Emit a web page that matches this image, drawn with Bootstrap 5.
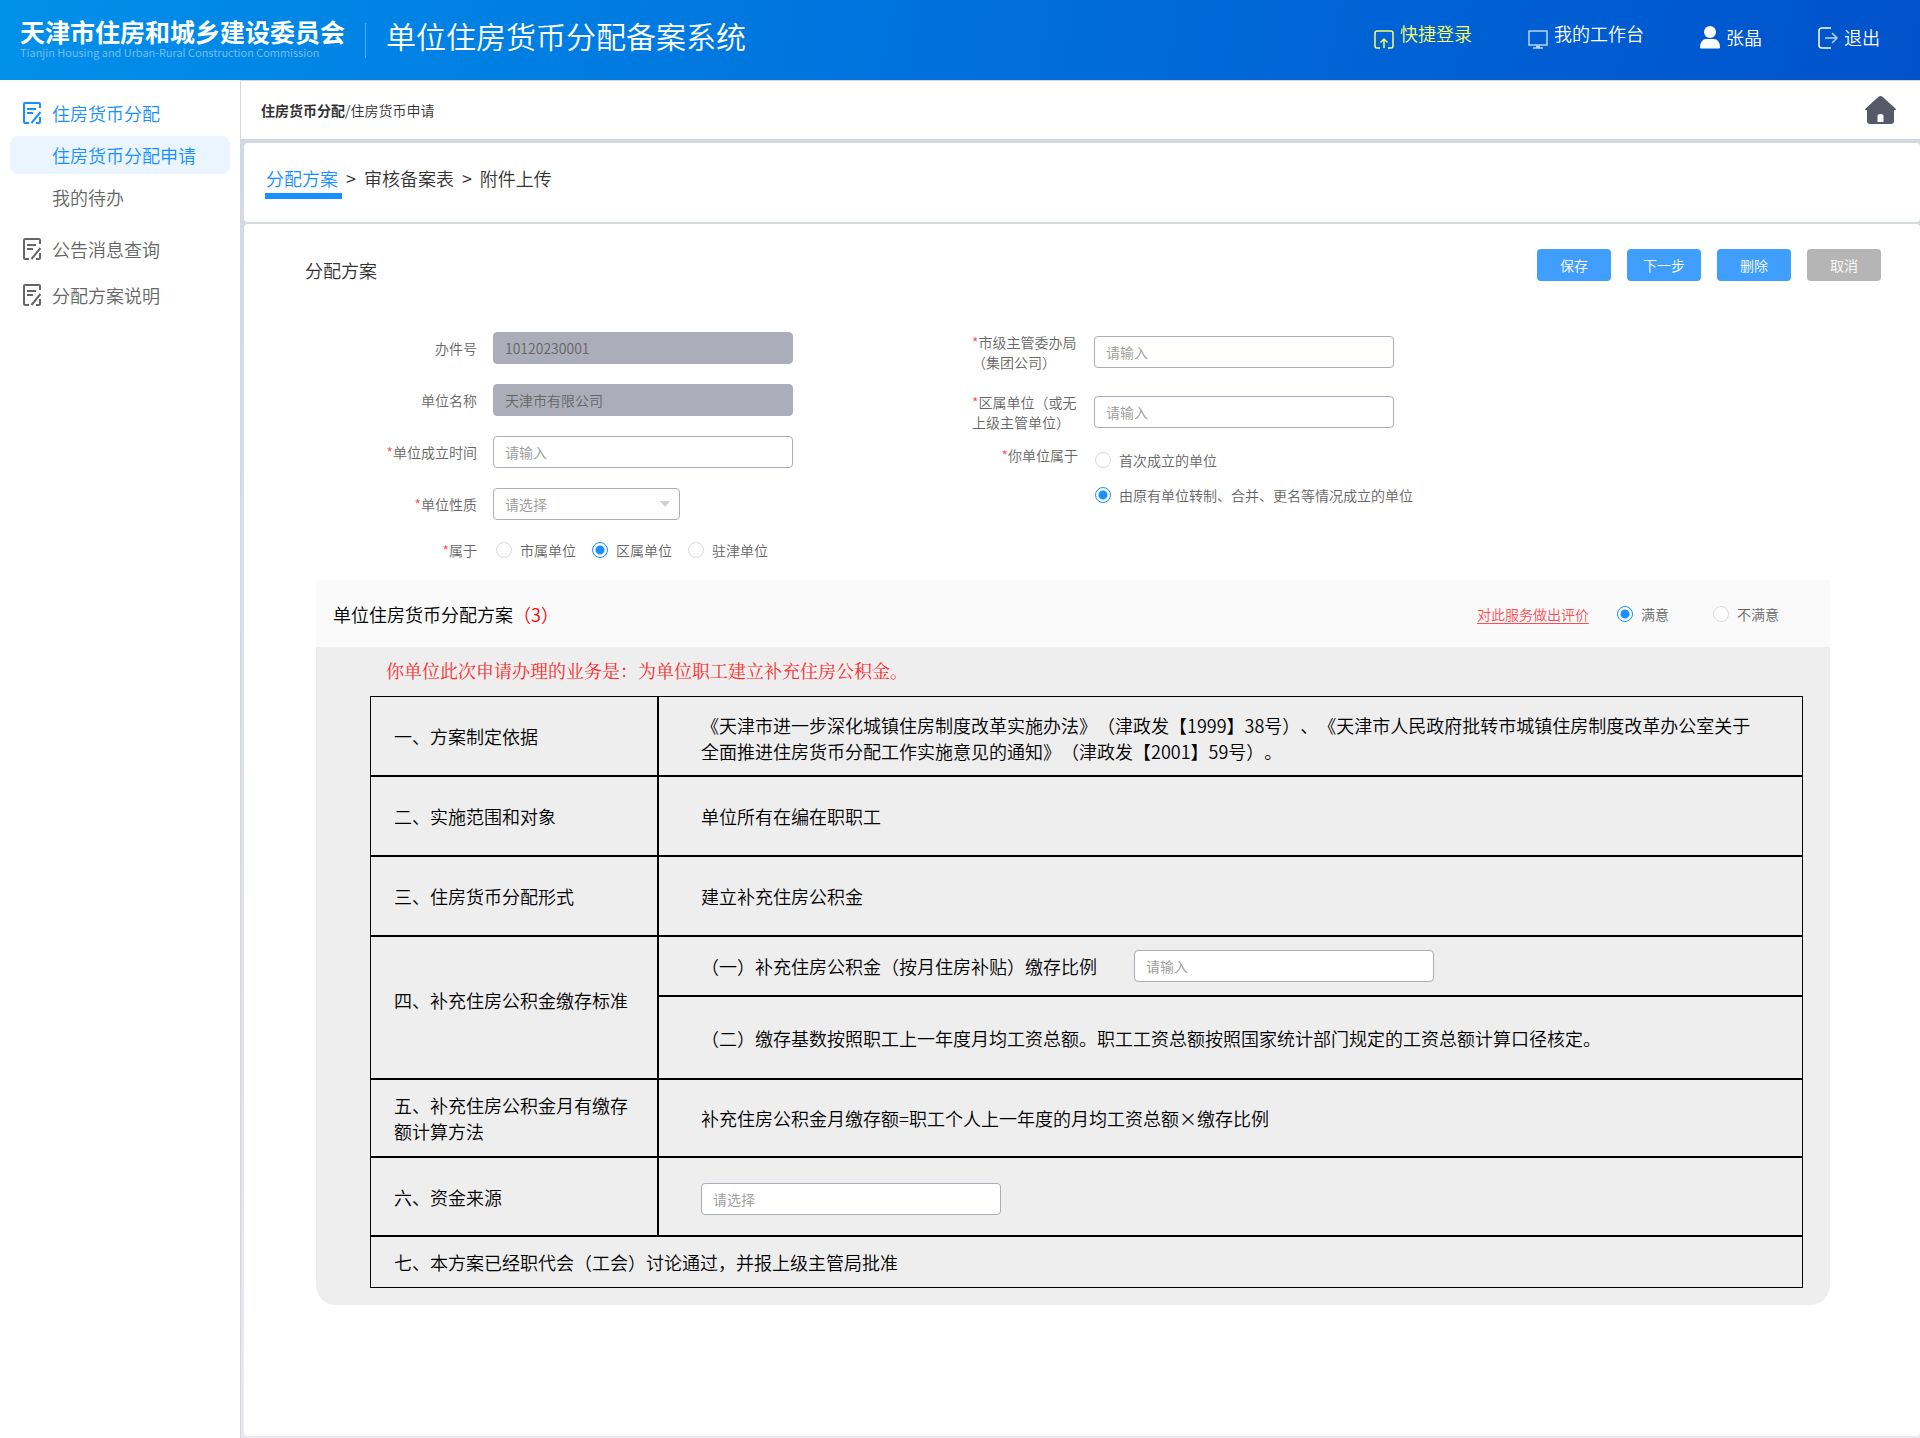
<!DOCTYPE html>
<html lang="zh-CN">
<head>
<meta charset="utf-8">
<meta name="viewport" content="width=device-width, initial-scale=1">
<title>单位住房货币分配备案系统</title>
<link rel="stylesheet" href="https://cdn.jsdelivr.net/npm/bootstrap@5.3.0/dist/css/bootstrap.min.css">
<style>
:root{--brand:#1890ff;--line:#d3d7e0;--field:#abadb9;--ink:#666}
body{font-family:"Noto Sans CJK SC",sans-serif;font-size:14px;font-weight:350;line-height:20px;color:var(--ink);background:#fff;text-spacing-trim:space-all}
a{text-decoration:none;color:inherit}
.topbar{height:80px;background:linear-gradient(100deg,#0190ea 0%,#0070dc 50%,#0052cb 100%);color:#fff;padding:0 40px 0 20px}
.org{padding-bottom:5px}
.org-name{font-size:25px;line-height:28px;font-weight:700}
.org-sub{font-size:11px;line-height:14px;color:#7cc3f3}
.brand-rule{width:1px;height:35px;background:#4fadf0;margin:0 20px}
.sys-name{font-size:30px;line-height:40px;padding-bottom:11px}
.topnav{gap:56px;font-size:18px;line-height:24px;padding-bottom:11px}
.topnav a{gap:6px;height:28px}
.topnav .hot{color:#f8ff6b}
.topnav svg,.side svg{flex:none}
.side{width:241px;flex:none;border-right:1px solid var(--line);padding:14px 10px;font-size:18px;line-height:38px}
.side a{height:38px;padding-left:13px}
.side svg{margin-right:11px}
.side .sub-item{padding-left:42px;border-radius:8px}
.side .sub-item.now{background:#eaf5ff}
.side .top-item{margin-top:14px}
.blue,.side .blue{color:var(--brand)}
.work{background:linear-gradient(#d3d7e0,#e9e9ef)}
.crumbs{height:59px;padding:0 24px 0 20px;background:#fff;color:#333;border-top:1px solid var(--line)}
.sheet{background:#fff;border-radius:4px;margin-left:3px}
.steps{height:79px;margin-top:4px;padding:21px 22px 0;font-size:18px;line-height:28px;color:#333}
.steps .step-now{border-bottom:6px solid var(--brand);height:35px;padding:0 4px 0 1px;margin:0 -4px 0 -1px}
.plan{margin-top:2px;margin-bottom:2px;padding:25px 39px 64px 61px}
.plan h1{font-size:18px;line-height:22px;color:#333}
.plan h1,.panel-top h2{font-weight:350;margin:0}
.act{width:74px;height:32px;border:0;border-radius:4px;padding:0;font-size:14px;font-weight:350;background:#409eff;color:#fff}
.act:hover{background:#66b1ff;color:#fff}
.act.off{background:#b5b5b5}
.form-area{margin-top:51px;gap:20px 179px;padding-left:40px}
.fld-row{margin-bottom:20px;gap:16px}
.fld-row:last-child{margin-bottom:0}
.fl{width:132px;flex:none;display:flex;justify-content:flex-end}
.fr .fl{width:106px}
.fr .fld-row:nth-child(2){margin-bottom:13px}
.req::before{content:"*";color:#ff4d4f}
.fl.two-line{display:block}
.ctl.form-control,.ctl.form-select{width:300px;height:32px;padding:0 11px;font-size:14px;font-weight:350;line-height:20px;border:1px solid var(--field);border-radius:4px;color:#999;background-color:#fff}
.ctl::placeholder{color:#999;opacity:1}
.ctl.form-control:disabled{background:var(--field);color:var(--ink)}
.ctl.form-select.short{width:187px;background:#fff url("data:image/svg+xml,%3Csvg xmlns='http://www.w3.org/2000/svg' viewBox='0 0 10 6'%3E%3Cpath d='M0 0h10L5 6z' fill='%23d0d0d0'/%3E%3C/svg%3E") no-repeat right 9px center/10px 6px}
.ctl.form-select.bare{background-image:none}
.rd{gap:8px;height:20px}
.rd-set{padding-left:3px}
.rd-col{gap:15px;padding:5px 0 0 1px}
.form-check-input.dot{width:16px;height:16px;margin:0;border:1px solid #d9d9d9;background-color:#fff;flex:none}
.form-check-input.dot:checked{border-color:var(--brand);background-color:#fff;background-image:radial-gradient(circle,#1890ff 4px,transparent 5px)}
.panel-box{margin:20px 51px 0 11px;background:#eee;border-radius:0 0 20px 20px}
.panel-top{height:67px;background:#fafafa;padding:0 51px 0 17px}
.panel-top h2{font-size:18px;line-height:28px;color:#000}
.alarm{color:#f00}
.rate{color:#ff4d4f;text-decoration:underline;text-underline-offset:3px;margin-right:28px}
.rate-set{gap:44px}
.panel-main{padding:11px 27px 17px 54px}
.note{font-family:"Liberation Serif","Noto Serif CJK SC","Noto Sans CJK SC",serif;font-size:18px;font-weight:400;line-height:28px;color:#ff2a2a;padding-left:16px;margin-bottom:10px}
.rules{width:100%;border-collapse:separate;border-spacing:0;border:0;font-size:18px;line-height:26px;color:#000;table-layout:fixed}
.rules col:first-child{width:288px}
.rules th,.rules td{border:1px solid #000;font-weight:350;height:80px;padding:0 40px 0 42px;vertical-align:middle}
.rules th{padding:0 20px 0 23px;text-align:left}
.rules .low>td{height:60px}
.rules .low>th{padding-bottom:15px}
.rules .base>td{height:83px}
.rules .calc>*{height:78px}
.rules .fund>*{height:79px}
.rules .last>th{height:52px}
.rules td.drop{padding-top:4px}
.pct-line{gap:37px}
</style>
</head>
<body class="d-flex flex-column min-vh-100">
<svg class="d-none" xmlns="http://www.w3.org/2000/svg">
  <symbol id="doc" viewBox="0 0 18 22"><path fill="none" stroke="currentColor" stroke-width="2" d="M6 21H2Q1 21 1 20V2Q1 1 2 1h14Q17 1 17 2V6M17 15v5Q17 21 16 21H13M4 7h9M4 11h6M17.500 10 8.500 21"/></symbol>
</svg>

<header class="topbar d-flex align-items-center">
  <div class="org">
    <div class="org-name">天津市住房和城乡建设委员会</div>
    <div class="org-sub">Tianjin Housing and Urban-Rural Construction Commission</div>
  </div>
  <div class="brand-rule"></div>
  <div class="sys-name">单位住房货币分配备案系统</div>
  <nav class="topnav d-flex ms-auto" aria-label="快捷">
    <a href="#" class="hot d-flex">
      <svg class="align-self-end" width="20" height="19" viewBox="0 0 20 19" fill="none" stroke="currentColor" stroke-width="1.500"><path d="M6 18H3Q1 18 1 16V3Q1 1 3 1h14q2 0 2 2v13q0 2-2 2h-3M10 18V9M6.500 12.500 10 9l3.500 3.500"/></svg>
      <span>快捷登录</span></a>
    <a href="#" class="d-flex">
      <svg class="align-self-end" width="20" height="19" viewBox="0 0 20 19" fill="none" stroke="#b8d6f7" stroke-width="1.500"><rect x="1" y="1" width="18" height="14"/><path d="M5 18h10M8 16.500h4"/></svg>
      <span>我的工作台</span></a>
    <a href="#" class="d-flex align-items-end">
      <svg width="20" height="23" viewBox="0 0 20 23" fill="#fff"><circle cx="10" cy="6" r="6"/><path d="M0 21.500C0 16 3 13 6 13h8c3 0 6 3 6 8.500q0 1-1 1H1q-1 0-1-1z"/></svg>
      <span>张晶</span></a>
    <a href="#" class="d-flex align-items-end">
      <svg width="20" height="22" viewBox="0 0 20 22" fill="none" stroke="#fff" stroke-width="1.500"><path d="M13 1H4Q1 1 1 4v14q0 3 3 3h9"/><path stroke="#b8d6f7" d="M7 11h12M14 6l5 5-5 5"/></svg>
      <span>退出</span></a>
  </nav>
</header>

<div class="d-flex flex-grow-1">
  <nav class="side d-flex flex-column" aria-label="菜单">
    <a href="#" class="blue d-flex align-items-center"><svg width="18" height="22"><use href="#doc"/></svg>住房货币分配</a>
    <a href="#" class="sub-item now blue d-block mt-1">住房货币分配申请</a>
    <a href="#" class="sub-item d-block mt-1">我的待办</a>
    <a href="#" class="top-item d-flex align-items-center"><svg width="18" height="22"><use href="#doc"/></svg>公告消息查询</a>
    <a href="#" class="d-flex align-items-center mt-2"><svg width="18" height="22"><use href="#doc"/></svg>分配方案说明</a>
  </nav>

  <main class="work d-flex flex-column flex-grow-1">
    <div class="crumbs d-flex align-items-center justify-content-between">
      <div><strong>住房货币分配</strong>/住房货币申请</div>
      <a href="#" aria-label="首页"><svg class="d-block" width="31" height="28" viewBox="0 0 31 28" fill="#555a66"><path fill-rule="evenodd" d="M13 1.200Q15.500-1 18 1.200l12.500 11.300q1 1.500-.500 1.500H29v11q0 3-3 3H5q-3 0-3-3V14H1q-1.500 0-.5-1.500zM12.500 26h6v-6q0-2-3-2t-3 2z"/></svg></a>
    </div>

    <div class="sheet steps d-flex align-items-start gap-2">
      <a href="#" class="step-now blue">分配方案</a><span>&gt;</span><a href="#">审核备案表</a><span>&gt;</span><a href="#">附件上传</a>
    </div>

    <form class="sheet plan flex-grow-1">
      <div class="d-flex justify-content-between align-items-end">
        <h1>分配方案</h1>
        <div class="d-flex gap-3">
          <button type="button" class="btn act">保存</button>
          <button type="button" class="btn act">下一步</button>
          <button type="button" class="btn act">删除</button>
          <button type="button" class="btn act off">取消</button>
        </div>
      </div>

      <div class="form-area d-flex flex-wrap">
        <div>
          <div class="fld-row d-flex align-items-center"><label class="fl" for="f1">办件号</label><input id="f1" class="form-control ctl" value="10120230001" disabled></div>
          <div class="fld-row d-flex align-items-center"><label class="fl" for="f2">单位名称</label><input id="f2" class="form-control ctl" value="天津市有限公司" disabled></div>
          <div class="fld-row d-flex align-items-center"><label class="fl req" for="f3">单位成立时间</label><input id="f3" class="form-control ctl" placeholder="请输入"></div>
          <div class="fld-row d-flex align-items-center"><label class="fl req" for="f4">单位性质</label><select id="f4" class="form-select ctl short"><option>请选择</option></select></div>
          <div class="fld-row d-flex align-items-center" role="radiogroup" aria-labelledby="g1">
            <span class="fl req" id="g1">属于</span>
            <div class="rd-set d-flex gap-3">
              <label class="rd d-flex align-items-center"><input class="form-check-input dot" type="radio" name="belong">市属单位</label>
              <label class="rd d-flex align-items-center"><input class="form-check-input dot" type="radio" name="belong" checked>区属单位</label>
              <label class="rd d-flex align-items-center"><input class="form-check-input dot" type="radio" name="belong">驻津单位</label>
            </div>
          </div>
        </div>
        <div class="fr">
          <div class="fld-row d-flex align-items-center"><label class="fl req two-line" for="f5">市级主管委办局<br>（集团公司）</label><input id="f5" class="form-control ctl" placeholder="请输入"></div>
          <div class="fld-row d-flex align-items-center"><label class="fl req two-line" for="f6">区属单位（或无<br>上级主管单位）</label><input id="f6" class="form-control ctl" placeholder="请输入"></div>
          <div class="fld-row d-flex align-items-start" role="radiogroup" aria-labelledby="g2">
            <span class="fl req" id="g2">你单位属于</span>
            <div class="rd-set rd-col d-flex flex-column">
              <label class="rd d-flex align-items-center"><input class="form-check-input dot" type="radio" name="origin">首次成立的单位</label>
              <label class="rd d-flex align-items-center"><input class="form-check-input dot" type="radio" name="origin" checked>由原有单位转制、合并、更名等情况成立的单位</label>
            </div>
          </div>
        </div>
      </div>

      <section class="panel-box">
        <div class="panel-top d-flex align-items-center justify-content-between">
          <h2>单位住房货币分配方案<span class="alarm">（3）</span></h2>
          <div class="d-flex align-items-center">
            <a href="#" class="rate">对此服务做出评价</a>
            <div class="rate-set d-flex">
              <label class="rd d-flex align-items-center"><input class="form-check-input dot" type="radio" name="rate" checked>满意</label>
              <label class="rd d-flex align-items-center"><input class="form-check-input dot" type="radio" name="rate">不满意</label>
            </div>
          </div>
        </div>
        <div class="panel-main">
          <p class="note">你单位此次申请办理的业务是：为单位职工建立补充住房公积金。</p>
          <table class="rules">
            <colgroup><col><col></colgroup>
            <tbody>
              <tr><th scope="row">一、方案制定依据</th><td class="drop">《天津市进一步深化城镇住房制度改革实施办法》（津政发【1999】38号）、《天津市人民政府批转市城镇住房制度改革办公室关于全面推进住房货币分配工作实施意见的通知》（津政发【2001】59号）。</td></tr>
              <tr><th scope="row">二、实施范围和对象</th><td>单位所有在编在职职工</td></tr>
              <tr><th scope="row">三、住房货币分配形式</th><td>建立补充住房公积金</td></tr>
              <tr class="low"><th scope="row" rowspan="2">四、补充住房公积金缴存标准</th><td><div class="pct-line d-flex align-items-center"><label for="f7">（一）补充住房公积金（按月住房补贴）缴存比例</label><input id="f7" class="form-control ctl" placeholder="请输入"></div></td></tr>
              <tr class="base"><td>（二）缴存基数按照职工上一年度月均工资总额。职工工资总额按照国家统计部门规定的工资总额计算口径核定。</td></tr>
              <tr class="calc"><th scope="row">五、补充住房公积金月有缴存额计算方法</th><td>补充住房公积金月缴存额=职工个人上一年度的月均工资总额×缴存比例</td></tr>
              <tr class="fund"><th scope="row" id="src">六、资金来源</th><td class="drop"><select class="form-select ctl bare" aria-labelledby="src"><option>请选择</option></select></td></tr>
              <tr class="last"><th scope="row" colspan="2">七、本方案已经职代会（工会）讨论通过，并报上级主管局批准</th></tr>
            </tbody>
          </table>
        </div>
      </section>
    </form>
  </main>
</div>
<script src="https://cdn.jsdelivr.net/npm/bootstrap@5.3.0/dist/js/bootstrap.bundle.min.js"></script>
</body>
</html>
